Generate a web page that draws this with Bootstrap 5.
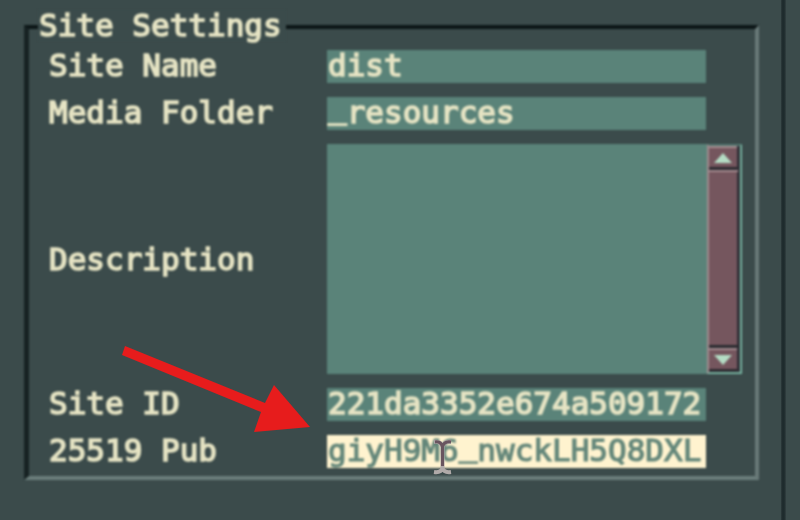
<!DOCTYPE html>
<html lang="en">
<head>
<meta charset="utf-8">
<meta name="viewport" content="width=device-width, initial-scale=1">
<title>Site Settings</title>
<link rel="stylesheet" href="https://cdn.jsdelivr.net/npm/bootstrap@5.3.0/dist/css/bootstrap.min.css">
<style>
:root{--panel:#3b4b4b;--field:#5a8379;--cream:#e6e4c4}
body{background:var(--panel);width:800px;height:520px;color:var(--cream);font:31px/32px "DejaVu Sans Mono","Liberation Mono",monospace}
.pane{width:781px;height:520px;padding:25px 0 0 24px}
.divider{width:5px;background:linear-gradient(90deg,#2d3a3b,#1d2a2c 35%,#1f2c2e 65%,#334142)}
.group-box{width:735px;height:455px;filter:blur(.8px);border:solid;border-width:4px 4px 4px 5px;border-color:#0c1617 #697978 #6b7d7b #172223;padding:21px 0 0 20px}
.group-title{left:9px;top:-19px;width:248px;background:var(--panel);padding-left:1px;margin:0;font:inherit}
.txt{white-space:pre;-webkit-text-stroke:1.6px currentColor;line-height:31px}
.form-grid{display:grid;grid-template-columns:278px 415px;grid-template-rows:33px 33px 230px 33px 33px;row-gap:14px;width:693px}
.field{width:379px;background:var(--field);padding-left:1px}
.underscore{display:inline-block;transform:translateY(-5px)}
.picked{background:#fff3cf;color:#64877a;-webkit-text-stroke-width:1.2px}
.area{background:var(--field)}
.scroller{width:35px;background:#75565e;border:solid;border-width:2px 2px 2px 2px;border-color:#53766f #78b5a2 #78b5a2 #a08b8e;padding-right:2px;box-shadow:inset -3px 0 #302e36}
.step{height:24px;margin-right:1px;background:#75565e;border-top:2px solid #a48b8f;border-bottom:3px solid #2c2a30}
.track{border-top:2px solid #a48b8f;border-bottom:3px solid #292a2f}
.arrow{left:122px;top:345px}
.ibeam{left:431px;top:439px;filter:blur(.7px)}
</style>
</head>
<body class="m-0 overflow-hidden position-relative">
<main class="d-flex">
  <section class="pane">
    <div class="group-box position-relative">
      <h1 class="group-title txt position-absolute">Site Settings</h1>
      <form class="form-grid align-items-stretch">
        <label class="txt">Site Name</label><div class="field txt">dist</div>
        <label class="txt">Media Folder</label><div class="field txt"><span class="underscore">_</span>resources</div>
        <label class="txt align-self-center">Description</label>
        <div class="area d-flex justify-content-end">
          <div class="scroller d-flex flex-column">
            <div class="step d-flex align-items-center justify-content-center"><svg width="20" height="12"><path d="M1 11 10 1 19 11Z" fill="#b4dcc4"/></svg></div>
            <div class="track flex-grow-1"></div>
            <div class="step d-flex align-items-center justify-content-center"><svg width="20" height="12"><path d="M1 1H19L10 11Z" fill="#b4dcc4"/></svg></div>
          </div>
        </div>
        <label class="txt">Site ID</label><div class="field txt">221da3352e674a509172</div>
        <label class="txt">25519 Pub</label><div class="field picked txt">giyH9M6<span class="underscore">_</span>nwckLH5Q8DXL</div>
      </form>
    </div>
  </section>
  <div class="divider"></div>
</main>
<svg class="ibeam position-absolute" width="24" height="36" fill="none"><path d="M3 33Q10 34 11.500 29Q13 34 20 33M3 3Q10 2 11.500 8Q13 2 20 3M11.500 6V30" stroke="#b0aaa9" stroke-width="4"/><path d="M4 3Q10 2 11.500 8Q13 2 20 3M11.500 6V27" stroke="#69555f" stroke-width="3"/></svg>
<svg class="arrow position-absolute" width="190" height="90"><path d="M3 1 143 58 152 40 188 82 132 87 139 67 0 10Z" fill="#e71c1c"/></svg>
<script src="https://cdn.jsdelivr.net/npm/bootstrap@5.3.0/dist/js/bootstrap.bundle.min.js"></script>
</body>
</html>
